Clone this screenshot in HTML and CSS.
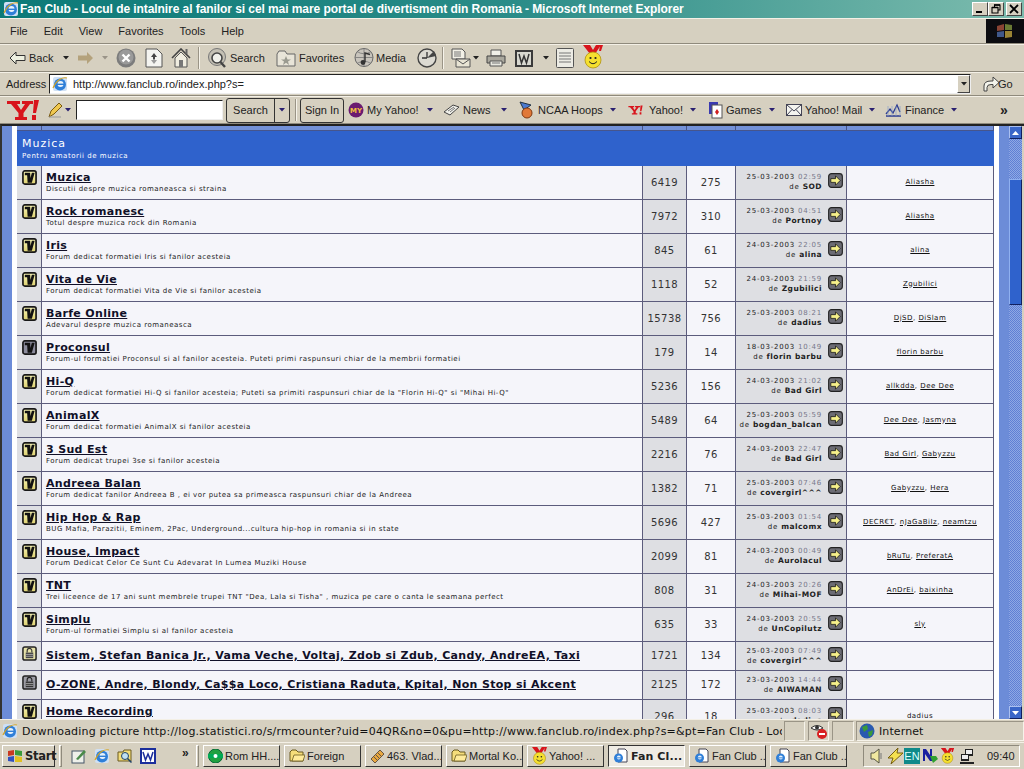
FILE: index.html
```html
<!DOCTYPE html>
<html lang="ro">
<head>
<meta charset="utf-8">
<title>Fan Club</title>
<link rel="stylesheet" href="styles.css">
</head>
<body>
<svg class="defs" width="0" height="0" aria-hidden="true">
  <defs>
    <linearGradient id="yg" x1="0" y1="0" x2="0" y2="1"><stop offset="0" stop-color="#fbf8b8"/><stop offset="1" stop-color="#dcd070"/></linearGradient>
    <symbol id="ie" viewBox="0 0 16 16">
      <rect x="1" y="1" width="14" height="14" rx="2" fill="#cfe0f4"/>
      <circle cx="8" cy="8.5" r="6" fill="#2f7fd8"/>
      <circle cx="8.5" cy="8" r="3" fill="#e8f2fb"/>
      <rect x="5" y="7.6" width="7" height="1.4" fill="#2f7fd8"/>
      <path d="M1 12C5 3 11 1 15 2" fill="none" stroke="#d9a520" stroke-width="1.2"/>
    </symbol>
    <symbol id="caret" viewBox="0 0 6 4"><path d="M0 0H6L3 3.5Z" fill="#222"/></symbol>
    <symbol id="ycaret" viewBox="0 0 6 4"><path d="M0 0H6L3 3.5Z" fill="#2a2070"/></symbol>
    <symbol id="ybang" viewBox="0 0 32 22">
      <path d="M0 2H13V5H10L14 11 18 5H15V2H26V5H23L16.500 14V18H20V21H8V18H11.500V14L4 5H0Z" fill="#d8141c"/>
      <path d="M27 1H32L29 14H26ZM25 16H29V21H25Z" fill="#d8141c"/>
    </symbol>
    <symbol id="forum" viewBox="0 0 16 16">
      <rect x="1" y="1" width="14" height="14" rx="2" fill="url(#yg)" stroke="#181818" stroke-width="1.8"/>
      <path d="M3 3H8.700L9 8.500 10.500 3H13.500L10.500 13.500H6L5.500 5.500H3Z" fill="#111"/>
    </symbol>
    <symbol id="forum-dim" viewBox="0 0 16 16">
      <rect x="1" y="1" width="14" height="14" rx="2" fill="#8c8c9c" stroke="#181818" stroke-width="1.8"/>
      <path d="M3 3H8.700L9 8.500 10.500 3H13.500L10.500 13.500H6L5.500 5.500H3Z" fill="#111"/>
    </symbol>
    <symbol id="lock" viewBox="0 0 16 16">
      <rect x="1" y="1" width="14" height="14" rx="2" fill="#e6e2a8" stroke="#222" stroke-width="1.6"/>
      <path d="M5.500 7V5A2.500 2.500 0 0 1 10.500 5V7" fill="none" stroke="#333" stroke-width="1.2"/>
      <rect x="4" y="7" width="8" height="6" fill="#444"/>
      <path d="M4 9H12M4 11H12" stroke="#bbb" stroke-width=".8"/>
    </symbol>
    <symbol id="lock-dim" viewBox="0 0 16 16">
      <rect x="1" y="1" width="14" height="14" rx="2" fill="#9c9ca4" stroke="#222" stroke-width="1.6"/>
      <path d="M5.500 7V5A2.500 2.500 0 0 1 10.500 5V7" fill="none" stroke="#222" stroke-width="1.2"/>
      <rect x="4" y="7" width="8" height="6" fill="#333"/>
      <path d="M4 9H12M4 11H12" stroke="#bbb" stroke-width=".8"/>
    </symbol>
    <symbol id="go" viewBox="0 0 16 16">
      <rect x=".7" y=".7" width="14.600" height="14.600" rx="3" fill="#6c6c74" stroke="#222" stroke-width="1.200"/>
      <path d="M3 6H8V3L13 8 8 13V10H3Z" fill="#f6f08a" stroke="#111" stroke-width=".8"/>
    </symbol>
    <symbol id="folder" viewBox="0 0 16 14">
      <path d="M1 3L3 1H7L9 3H14V12H1Z" fill="#f5dd7a" stroke="#6a5a20"/>
      <path d="M3 12L5 6H16L14 12Z" fill="#ffeb9a" stroke="#6a5a20" stroke-width=".8"/>
    </symbol>
    <symbol id="doc" viewBox="0 0 16 16">
      <path d="M5 1H12L14 3V14H5Z" fill="#fff" stroke="#445"/>
      <circle cx="5.500" cy="10" r="4.500" fill="#2f7fd8"/>
      <circle cx="5.800" cy="9.600" r="2" fill="#e8f2fb"/>
      <rect x="3.500" y="9.400" width="4.500" height=".9" fill="#2f7fd8"/>
    </symbol>
    <symbol id="smile" viewBox="0 0 20 24">
      <path d="M0 0H7L10 5 13 0H18L12 9H7Z" fill="#d8141c"/>
      <path d="M17 0H20L18 6H16Z" fill="#d8141c"/>
      <circle cx="10" cy="15" r="8" fill="#f5e030" stroke="#b09010" stroke-width=".8"/>
      <circle cx="7.500" cy="13" r="1.100" fill="#222"/>
      <circle cx="12.500" cy="13" r="1.100" fill="#222"/>
      <path d="M6 16.500Q10 21 14 16.500" fill="none" stroke="#222" stroke-width="1"/>
    </symbol>
  </defs>
</svg>

<header class="titlebar">
  <svg class="ic16" viewBox="0 0 16 16"><use href="#ie"/></svg>
  <span class="titletext">Fan Club - Locul de intalnire al fanilor si cel mai mare portal de divertisment din Romania - Microsoft Internet Explorer</span>
  <span class="winbtns">
    <span class="winbtn"><svg width="10" height="10" viewBox="0 0 10 10"><rect x="1" y="7" width="6" height="2" fill="#000"/></svg></span>
    <span class="winbtn"><svg width="10" height="10" viewBox="0 0 10 10"><path d="M3.500 3V1H9V6H7M1 3.500H7V9H1Z" fill="none" stroke="#000" stroke-width="1.100"/><path d="M3 1H9M1 3.500H7" stroke="#000" stroke-width="1.600"/></svg></span>
    <span class="winbtn winclose"><svg width="10" height="10" viewBox="0 0 10 10"><path d="M1 1L9 9M9 1L1 9" stroke="#000" stroke-width="1.800"/></svg></span>
  </span>
</header>

<nav class="menubar">
  <span>File</span><span>Edit</span><span>View</span><span>Favorites</span><span>Tools</span><span>Help</span>
  <span class="flag"><svg width="18" height="16" viewBox="0 0 18 16"><path d="M1 3L8 1V7L1 8Z" fill="#8a4434"/><path d="M9 1L16 2V7L9 7Z" fill="#6a7a34"/><path d="M1 9L8 8V14L1 14Z" fill="#40588a"/><path d="M9 8H16V14L9 15Z" fill="#9a8434"/></svg></span>
</nav>

<div class="toolbar">
  <svg class="t-back" width="17" height="14" viewBox="0 0 17 14"><path d="M7 1L1 7 7 13V9.500H16V4.500H7Z" fill="#eef0e0" stroke="#333"/></svg>
  <span class="t-label l-back">Back</span>
  <svg class="cr c-back" width="6" height="4"><use href="#caret"/></svg>
  <svg class="t-fwd" width="17" height="14" viewBox="0 0 17 14"><path d="M10 1L16 7 10 13V9.500H1V4.500H10Z" fill="#b4a27c"/></svg>
  <svg class="cr c-fwd" width="6" height="4" viewBox="0 0 6 4"><path d="M0 0H6L3 3.500Z" fill="#9a9488"/></svg>
  <svg class="t-stop" width="20" height="20" viewBox="0 0 20 20"><circle cx="10" cy="10" r="9.500" fill="#7c7c7c"/><circle cx="10" cy="9" r="7.500" fill="#9a9a9a"/><path d="M6.500 6.500L13.500 13.500M13.500 6.500L6.500 13.500" stroke="#fff" stroke-width="2.400"/></svg>
  <svg class="t-ref" width="18" height="20" viewBox="0 0 18 20"><path d="M1 1H12L17 6V19H1Z" fill="#f4f4f0" stroke="#555"/><path d="M9 5L6 9H8V11H10V9H12Z" fill="#444"/><path d="M9 16L12 12H10V11H8V12H6Z" fill="#9a9a9a"/></svg>
  <svg class="t-home" width="20" height="20" viewBox="0 0 20 20"><path d="M1 10L10 1 19 10" fill="none" stroke="#444" stroke-width="1.600"/><path d="M4 10L10 4 16 10V19H4Z" fill="#f0ede0" stroke="#555"/><rect x="8" y="12" width="4" height="7" fill="#777"/><rect x="14.500" y="1" width="2" height="5" fill="#666"/></svg>
  <span class="sep s1"></span>
  <svg class="t-search" width="20" height="21" viewBox="0 0 20 21"><circle cx="10" cy="9" r="8.500" fill="#c4c0b4" stroke="#777"/><circle cx="10" cy="10" r="5" fill="#f0f0ea" stroke="#444" stroke-width="1.600"/><path d="M13.500 14L18 19" stroke="#444" stroke-width="2.400"/></svg>
  <span class="t-label l-search">Search</span>
  <svg class="t-fav" width="20" height="17" viewBox="0 0 20 17"><path d="M1 4L3 1H9L11 4H19V16H1Z" fill="#e8e4d8" stroke="#666"/><path d="M10 6L11.500 9.500H15L12 11.500 13 15 10 12.800 7 15 8 11.500 5 9.500H8.500Z" fill="#9a9a90"/></svg>
  <span class="t-label l-fav">Favorites</span>
  <svg class="t-media" width="20" height="20" viewBox="0 0 20 20"><circle cx="10" cy="9.500" r="9" fill="#c8c4bc" stroke="#666"/><path d="M1 9.500H19M10 .5V18.500M3 3.500Q10 8 17 3.500M3 15.500Q10 11 17 15.500" fill="none" stroke="#777" stroke-width=".8"/><path d="M11 14V5L16 6.500" fill="none" stroke="#333" stroke-width="1.400"/><circle cx="9" cy="14.500" r="2.400" fill="#333"/></svg>
  <span class="t-label l-media">Media</span>
  <svg class="t-hist" width="20" height="20" viewBox="0 0 20 20"><circle cx="10" cy="10" r="9" fill="#dcdad2" stroke="#444" stroke-width="1.400"/><path d="M10 10L17 3 19 8Z" fill="#444"/><path d="M10 10V4M10 10H5" stroke="#333" stroke-width="1.300"/></svg>
  <span class="sep s2"></span>
  <svg class="t-mail" width="20" height="20" viewBox="0 0 20 20"><path d="M1 1H11L14 4V11H1Z" fill="#f2f0e6" stroke="#555"/><path d="M3 4H10M3 6H10M3 8H10" stroke="#777"/><path d="M5 11H19V19H5Z" fill="#e8e4d4" stroke="#555"/><path d="M5 11L12 16 19 11" fill="none" stroke="#555"/></svg>
  <svg class="cr c-mail" width="6" height="4"><use href="#caret"/></svg>
  <svg class="t-print" width="20" height="18" viewBox="0 0 20 18"><path d="M5 1H15V7H5Z" fill="#f0f0e8" stroke="#555"/><path d="M1 7H19V14H1Z" fill="#aaa89e" stroke="#444"/><path d="M4 12H16V17H4Z" fill="#e8e8e0" stroke="#555"/><path d="M6 14H14" stroke="#777"/></svg>
  <svg class="t-word" width="18" height="17" viewBox="0 0 18 17"><rect width="18" height="17" fill="#3a3a3a"/><rect x="2" y="2" width="14" height="13" fill="#d8d8d0"/><path d="M4 4L6.500 13 9 6 11.500 13 14 4" fill="none" stroke="#333" stroke-width="1.500"/></svg>
  <svg class="cr c-word" width="6" height="4"><use href="#caret"/></svg>
  <svg class="t-disc" width="18" height="20" viewBox="0 0 18 20"><rect x=".5" y=".5" width="17" height="19" rx="1" fill="#ecebe4" stroke="#555"/><path d="M3 5H15M3 8H15M3 11H15M3 14H15" stroke="#777"/></svg>
  <svg class="t-yim" width="20" height="24" viewBox="0 0 20 24"><use href="#smile"/></svg>
</div>

<div class="addressbar">
  <span class="addr-label">Address</span>
  <div class="addr-field">
    <svg class="ic16" viewBox="0 0 16 16"><use href="#ie"/></svg>
    <span class="addr-url">http://www.fanclub.ro/index.php?s=</span>
    <span class="addr-drop"><svg width="6" height="4"><use href="#caret"/></svg></span>
  </div>
  <svg class="go-ic" width="17" height="16" viewBox="0 0 17 16"><path d="M1 15V10Q1 5 8 5H10V1L16 6.500 10 12V8.500H8Q4 8.500 4 11.500V15Z" fill="#f4f4ec" stroke="#444"/></svg>
  <span class="go-label">Go</span>
</div>

<div class="ybar">
  <svg class="y-logo" width="32" height="22"><use href="#ybang"/></svg>
  <svg class="y-pen" width="17" height="18" viewBox="0 0 17 18"><path d="M2 16L4 10 12 2 15 5 7 13Z" fill="#f0c850" stroke="#7a5a10"/><path d="M2 16H14" stroke="#999"/></svg>
  <svg class="cr y-pc" width="6" height="4"><use href="#ycaret"/></svg>
  <span class="y-input"></span>
  <span class="y-search"><span class="y-s-l">Search</span><span class="y-s-r"><svg width="6" height="4"><use href="#ycaret"/></svg></span></span>
  <span class="sep y-sep"></span>
  <span class="y-sign">Sign In</span>
  <span class="y-item w-my"><svg width="16" height="16" viewBox="0 0 16 16"><circle cx="8" cy="8" r="7.500" fill="#6a1a70"/><text x="8" y="11" class="my-t">MY</text></svg><span>My Yahoo!</span><svg class="cr" width="6" height="4"><use href="#ycaret"/></svg></span>
  <span class="y-item w-news"><svg width="17" height="12" viewBox="0 0 17 12"><path d="M1 8L10 1 16 3 7 11Z" fill="#f0f0ea" stroke="#444"/><path d="M5 7L11 3M7 8L12 4" stroke="#777"/></svg><span>News</span><svg class="cr" width="6" height="4"><use href="#ycaret"/></svg></span>
  <span class="y-item w-ncaa"><svg width="17" height="18" viewBox="0 0 17 18"><path d="M2 1L13 4 6 9Z" fill="#4a7ad0" stroke="#234"/><circle cx="9" cy="12" r="5" fill="#e07838" stroke="#803810"/></svg><span>NCAA Hoops</span><svg class="cr" width="6" height="4"><use href="#ycaret"/></svg></span>
  <span class="y-item w-yah"><svg width="17" height="10" viewBox="0 0 32 22"><use href="#ybang"/></svg><span>Yahoo!</span><svg class="cr" width="6" height="4"><use href="#ycaret"/></svg></span>
  <span class="y-item w-games"><svg width="15" height="17" viewBox="0 0 15 17"><rect x="1" y="0" width="9" height="12" fill="#3a3ab0"/><rect x="4" y="3" width="10" height="13" fill="#fff" stroke="#555"/><path d="M9 7L11 10 9 13 7 10Z" fill="#d02020"/></svg><span>Games</span><svg class="cr" width="6" height="4"><use href="#ycaret"/></svg></span>
  <span class="y-item w-mail"><svg width="16" height="12" viewBox="0 0 16 12"><rect x=".5" y=".5" width="15" height="11" fill="#f4f4ef" stroke="#445"/><path d="M1 1L8 7 15 1M1 11L6 5.500M15 11L10 5.500" fill="none" stroke="#445"/></svg><span>Yahoo! Mail</span><svg class="cr" width="6" height="4"><use href="#ycaret"/></svg></span>
  <span class="y-item w-fin"><svg width="17" height="14" viewBox="0 0 17 14"><path d="M1 13H16" stroke="#2a3a90" stroke-width="1.500"/><path d="M1 11L5 6 8 10 12 2 15 9" fill="none" stroke="#2a3a90" stroke-width="1.300"/><path d="M3 3V13M7 3V13M11 3V13M15 3V13" stroke="#8aa0c8" stroke-width=".7"/></svg><span>Finance</span><svg class="cr" width="6" height="4"><use href="#ycaret"/></svg></span>
  <span class="y-more">&raquo;</span>
</div>

<main class="viewport">
  <div class="page">
    <div class="sheet">
      <table class="forums">
        <colgroup><col class="c1"><col class="c2"><col class="c3"><col class="c4"><col class="c5"><col class="c6"></colgroup>
        <tbody>
          <tr class="strip"><td></td><td></td><td></td><td></td><td></td><td></td></tr>
          <tr class="cat"><td colspan="6"><div class="cat-t">Muzica</div><div class="cat-d">Pentru amatorii de muzica</div></td></tr>
          <tr><td class="i"><svg class="fi"><use href="#forum"/></svg></td><td class="n"><a class="ft">Muzica</a><div class="fd">Discutii despre muzica romaneasca si straina</div></td><td class="s">6419</td><td class="r">275</td><td class="l"><div class="lp"><div class="lt"><div>25-03-2003 <span class="h">02:59</span></div><div>de <b>SOD</b></div></div><svg class="ga"><use href="#go"/></svg></div></td><td class="m"><a>Aliasha</a></td></tr>
          <tr><td class="i"><svg class="fi"><use href="#forum"/></svg></td><td class="n"><a class="ft">Rock romanesc</a><div class="fd">Totul despre muzica rock din Romania</div></td><td class="s">7972</td><td class="r">310</td><td class="l"><div class="lp"><div class="lt"><div>25-03-2003 <span class="h">04:51</span></div><div>de <b>Portnoy</b></div></div><svg class="ga"><use href="#go"/></svg></div></td><td class="m"><a>Aliasha</a></td></tr>
          <tr><td class="i"><svg class="fi"><use href="#forum"/></svg></td><td class="n"><a class="ft">Iris</a><div class="fd">Forum dedicat formatiei Iris si fanilor acesteia</div></td><td class="s">845</td><td class="r">61</td><td class="l"><div class="lp"><div class="lt"><div>24-03-2003 <span class="h">22:05</span></div><div>de <b>alina</b></div></div><svg class="ga"><use href="#go"/></svg></div></td><td class="m"><a>alina</a></td></tr>
          <tr><td class="i"><svg class="fi"><use href="#forum"/></svg></td><td class="n"><a class="ft">Vita de Vie</a><div class="fd">Forum dedicat formatiei Vita de Vie si fanilor acesteia</div></td><td class="s">1118</td><td class="r">52</td><td class="l"><div class="lp"><div class="lt"><div>24-03-2003 <span class="h">21:59</span></div><div>de <b>Zgubilici</b></div></div><svg class="ga"><use href="#go"/></svg></div></td><td class="m"><a>Zgubilici</a></td></tr>
          <tr><td class="i"><svg class="fi"><use href="#forum"/></svg></td><td class="n"><a class="ft">Barfe Online</a><div class="fd">Adevarul despre muzica romaneasca</div></td><td class="s">15738</td><td class="r">756</td><td class="l"><div class="lp"><div class="lt"><div>25-03-2003 <span class="h">08:21</span></div><div>de <b>dadius</b></div></div><svg class="ga"><use href="#go"/></svg></div></td><td class="m"><a>DjSD</a>, <a>DiSlam</a></td></tr>
          <tr><td class="i"><svg class="fi"><use href="#forum-dim"/></svg></td><td class="n"><a class="ft">Proconsul</a><div class="fd">Forum-ul formatiei Proconsul si al fanilor acesteia. Puteti primi raspunsuri chiar de la membrii formatiei</div></td><td class="s">179</td><td class="r">14</td><td class="l"><div class="lp"><div class="lt"><div>18-03-2003 <span class="h">10:49</span></div><div>de <b>florin barbu</b></div></div><svg class="ga"><use href="#go"/></svg></div></td><td class="m"><a>florin barbu</a></td></tr>
          <tr><td class="i"><svg class="fi"><use href="#forum"/></svg></td><td class="n"><a class="ft">Hi-Q</a><div class="fd">Forum dedicat formatiei Hi-Q si fanilor acesteia; Puteti sa primiti raspunsuri chiar de la "Florin Hi-Q" si "Mihai Hi-Q"</div></td><td class="s">5236</td><td class="r">156</td><td class="l"><div class="lp"><div class="lt"><div>24-03-2003 <span class="h">21:02</span></div><div>de <b>Bad Girl</b></div></div><svg class="ga"><use href="#go"/></svg></div></td><td class="m"><a>allkdda</a>, <a>Dee Dee</a></td></tr>
          <tr><td class="i"><svg class="fi"><use href="#forum"/></svg></td><td class="n"><a class="ft">AnimalX</a><div class="fd">Forum dedicat formatiei AnimalX si fanilor acesteia</div></td><td class="s">5489</td><td class="r">64</td><td class="l"><div class="lp"><div class="lt"><div>25-03-2003 <span class="h">05:59</span></div><div>de <b>bogdan_balcan</b></div></div><svg class="ga"><use href="#go"/></svg></div></td><td class="m"><a>Dee Dee</a>, <a>Jasmyna</a></td></tr>
          <tr><td class="i"><svg class="fi"><use href="#forum"/></svg></td><td class="n"><a class="ft">3 Sud Est</a><div class="fd">Forum dedicat trupei 3se si fanilor acesteia</div></td><td class="s">2216</td><td class="r">76</td><td class="l"><div class="lp"><div class="lt"><div>24-03-2003 <span class="h">22:47</span></div><div>de <b>Bad Girl</b></div></div><svg class="ga"><use href="#go"/></svg></div></td><td class="m"><a>Bad Girl</a>, <a>Gabyzzu</a></td></tr>
          <tr><td class="i"><svg class="fi"><use href="#forum"/></svg></td><td class="n"><a class="ft">Andreea Balan</a><div class="fd">Forum dedicat fanilor Andreea B , ei vor putea sa primeasca raspunsuri chiar de la Andreea</div></td><td class="s">1382</td><td class="r">71</td><td class="l"><div class="lp"><div class="lt"><div>25-03-2003 <span class="h">07:46</span></div><div>de <b>covergirl^^^</b></div></div><svg class="ga"><use href="#go"/></svg></div></td><td class="m"><a>Gabyzzu</a>, <a>Hera</a></td></tr>
          <tr><td class="i"><svg class="fi"><use href="#forum"/></svg></td><td class="n"><a class="ft">Hip Hop &amp; Rap</a><div class="fd">BUG Mafia, Parazitii, Eminem, 2Pac, Underground...cultura hip-hop in romania si in state</div></td><td class="s">5696</td><td class="r">427</td><td class="l"><div class="lp"><div class="lt"><div>25-03-2003 <span class="h">01:54</span></div><div>de <b>malcomx</b></div></div><svg class="ga"><use href="#go"/></svg></div></td><td class="m"><a>DECR€T</a>, <a>nJaGaBiIz</a>, <a>neamtzu</a></td></tr>
          <tr><td class="i"><svg class="fi"><use href="#forum"/></svg></td><td class="n"><a class="ft">House, Impact</a><div class="fd">Forum Dedicat Celor Ce Sunt Cu Adevarat In Lumea Muziki House</div></td><td class="s">2099</td><td class="r">81</td><td class="l"><div class="lp"><div class="lt"><div>24-03-2003 <span class="h">00:49</span></div><div>de <b>Aurolacul</b></div></div><svg class="ga"><use href="#go"/></svg></div></td><td class="m"><a>bRuTu</a>, <a>PreferatA</a></td></tr>
          <tr><td class="i"><svg class="fi"><use href="#forum"/></svg></td><td class="n"><a class="ft">TNT</a><div class="fd">Trei liceence de 17 ani sunt membrele trupei TNT "Dea, Lala si Tisha" , muzica pe care o canta le seamana perfect</div></td><td class="s">808</td><td class="r">31</td><td class="l"><div class="lp"><div class="lt"><div>24-03-2003 <span class="h">20:26</span></div><div>de <b>Mihai-MOF</b></div></div><svg class="ga"><use href="#go"/></svg></div></td><td class="m"><a>AnDrEi</a>, <a>baixinha</a></td></tr>
          <tr><td class="i"><svg class="fi"><use href="#forum"/></svg></td><td class="n"><a class="ft">Simplu</a><div class="fd">Forum-ul formatiei Simplu si al fanilor acesteia</div></td><td class="s">635</td><td class="r">33</td><td class="l"><div class="lp"><div class="lt"><div>24-03-2003 <span class="h">20:55</span></div><div>de <b>UnCopilutz</b></div></div><svg class="ga"><use href="#go"/></svg></div></td><td class="m"><a>sly</a></td></tr>
          <tr class="short"><td class="i"><svg class="fi"><use href="#lock"/></svg></td><td class="n"><a class="ft">Sistem, Stefan Banica Jr., Vama Veche, Voltaj, Zdob si Zdub, Candy, AndreEA, Taxi</a></td><td class="s">1721</td><td class="r">134</td><td class="l"><div class="lp"><div class="lt"><div>25-03-2003 <span class="h">07:49</span></div><div>de <b>covergirl^^^</b></div></div><svg class="ga"><use href="#go"/></svg></div></td><td class="m"></td></tr>
          <tr class="short"><td class="i"><svg class="fi"><use href="#lock-dim"/></svg></td><td class="n"><a class="ft">O-ZONE, Andre, Blondy, Ca$$a Loco, Cristiana Raduta, Kpital, Non Stop si Akcent</a></td><td class="s">2125</td><td class="r">172</td><td class="l"><div class="lp"><div class="lt"><div>23-03-2003 <span class="h">14:44</span></div><div>de <b>AIWAMAN</b></div></div><svg class="ga"><use href="#go"/></svg></div></td><td class="m"></td></tr>
          <tr><td class="i"><svg class="fi"><use href="#forum"/></svg></td><td class="n"><a class="ft">Home Recording</a><div class="fd">Totul despre productia muzicala</div></td><td class="s">296</td><td class="r">18</td><td class="l"><div class="lp"><div class="lt"><div>25-03-2003 <span class="h">08:03</span></div><div>de <b>dadius</b></div></div><svg class="ga"><use href="#go"/></svg></div></td><td class="m"><a>dadius</a></td></tr>
        </tbody>
      </table>
    </div>
  </div>
  <div class="scrollbar">
    <span class="sb-btn"><svg width="7" height="4" viewBox="0 0 7 4"><path d="M0 4H7L3.500 0Z" fill="#fff"/></svg></span>
    <span class="sb-space s-a"></span>
    <span class="sb-thumb"></span>
    <span class="sb-space s-b"></span>
    <span class="sb-btn"><svg width="7" height="4" viewBox="0 0 7 4"><path d="M0 0H7L3.500 4Z" fill="#fff"/></svg></span>
  </div>
</main>

<div class="statusbar">
  <svg class="ic16 st-ie" viewBox="0 0 16 16"><use href="#ie"/></svg>
  <span class="st-text">Downloading picture http://log.statistici.ro/s/rmcounter?uid=04QR&amp;no=0&amp;pu=http://www.fanclub.ro/index.php?s=&amp;pt=Fan Club - Locul de intalnire</span>
  <span class="pane p1"></span>
  <span class="pane p2"><svg width="18" height="17" viewBox="0 0 18 17"><path d="M1 5Q7 0 13 5 7 9 1 5Z" fill="#fff" stroke="#333"/><circle cx="7" cy="4.500" r="2" fill="#333"/><circle cx="12" cy="11" r="5" fill="#d82020"/><rect x="9" y="10" width="6" height="2" fill="#fff"/></svg></span>
  <span class="pane p3"></span>
  <span class="pane p4"><svg width="16" height="16" viewBox="0 0 16 16"><circle cx="8" cy="8" r="7.500" fill="#2a5ab0"/><path d="M3 4L8 2 9 6 5 9ZM9 9L14 7 13 12 10 14Z" fill="#3a9a3a"/></svg><span class="p-net">Internet</span></span>
</div>

<footer class="taskbar">
  <span class="start"><svg width="16" height="14" viewBox="0 0 16 14"><path d="M1 2L7 1V6L1 7Z" fill="#c83820"/><path d="M8 1L15 2V7L8 6Z" fill="#3a9a3a"/><path d="M1 8L7 7V13L1 12Z" fill="#3050c0"/><path d="M8 7L15 8V13L8 13Z" fill="#e0c020"/></svg><b>Start</b></span>
  <span class="handle h1"></span>
  <svg class="ql q1" width="16" height="16" viewBox="0 0 16 16"><rect x="1" y="3" width="12" height="12" fill="#eef0ea" stroke="#456"/><path d="M5 11L13 2 15 4 7 12Z" fill="#4a8a4a"/></svg>
  <svg class="ql q2" width="16" height="16"><use href="#ie"/></svg>
  <svg class="ql q3" width="16" height="16" viewBox="0 0 16 16"><path d="M1 4H6L7 2H14V13H1Z" fill="#f3dc78" stroke="#6a5a20"/><circle cx="8" cy="8" r="3.500" fill="#bfe0f4" stroke="#246"/><path d="M10.500 10.500L14.500 14.500" stroke="#246" stroke-width="1.600"/></svg>
  <svg class="ql q4" width="16" height="16" viewBox="0 0 16 16"><rect width="16" height="16" fill="#1c2f9c"/><rect x="2" y="2" width="12" height="12" fill="#fff"/><path d="M3 4L5.500 12 8 6 10.500 12 13 4" fill="none" stroke="#1c2f9c" stroke-width="1.500"/></svg>
  <span class="ql-more">&raquo;</span>
  <span class="handle h2"></span>
  <span class="tasks">
    <span class="task"><svg width="15" height="14" viewBox="0 0 15 14"><circle cx="7.500" cy="7" r="7" fill="#20a040" stroke="#063"/><rect x="0" y="5" width="15" height="4" fill="#0a5"/><circle cx="7.500" cy="7" r="2" fill="#fff"/></svg><span>Rom HH....</span></span>
    <span class="task"><svg width="16" height="14"><use href="#folder"/></svg><span>Foreign</span></span>
    <span class="task"><svg width="15" height="15" viewBox="0 0 15 15"><path d="M1 10L10 1 14 5 5 14Z" fill="#e8a840" stroke="#654"/><path d="M4 8L8 12M6 6L10 10M8 4L12 8" stroke="#654"/></svg><span>463. Vlad...</span></span>
    <span class="task"><svg width="16" height="14"><use href="#folder"/></svg><span>Mortal Ko...</span></span>
    <span class="task"><svg width="15" height="18" viewBox="0 0 20 24"><use href="#smile"/></svg><span>Yahoo! ...</span></span>
    <span class="task active"><svg width="16" height="16"><use href="#doc"/></svg><span>Fan Cl...</span></span>
    <span class="task"><svg width="16" height="16"><use href="#doc"/></svg><span>Fan Club ...</span></span>
    <span class="task"><svg width="16" height="16"><use href="#doc"/></svg><span>Fan Club ...</span></span>
  </span>
  <span class="tray">
    <svg width="14" height="16" viewBox="0 0 14 16"><path d="M1 5H4L9 1V15L4 11H1Z" fill="#f0e8a0" stroke="#554"/><path d="M11 5V11" stroke="#777"/></svg>
    <svg class="tr-bolt" width="17" height="16" viewBox="0 0 17 16"><path d="M11 0L1 10 6 10 4 16 16 5H10Z" fill="#f4e050" stroke="#776010"/></svg>
    <span class="en">EN</span>
    <svg class="tr-n" width="16" height="16" viewBox="0 0 16 16"><path d="M1 1H4L8 7V1H10V13H8L3 6V13H1Z" fill="#1a20a0"/><path d="M8 8L14 8 16 11 11 15Z" fill="#30a030"/></svg>
    <svg class="tr-y" width="15" height="16" viewBox="0 0 20 24"><use href="#smile"/></svg>
    <svg class="tr-net" width="15" height="15" viewBox="0 0 15 15"><rect x="5" y="0" width="8" height="7" fill="#222"/><rect x="6" y="1" width="6" height="4" fill="#eee"/><rect x="1" y="5" width="8" height="7" fill="#222"/><rect x="2" y="6" width="6" height="4" fill="#eee"/><rect x="0" y="13" width="14" height="2" fill="#222"/></svg>
    <span class="clock">09:40</span>
  </span>
</footer>
</body>
</html>
```

FILE: styles.css
```css
* { box-sizing: border-box; }
html, body { margin: 0; padding: 0; }
body {
  width: 1024px; height: 769px; overflow: hidden;
  display: flex; flex-direction: column;
  background: #d6d0c0; color: #111;
  font: 11px "Liberation Sans", Arial, sans-serif;
}
.defs { position: absolute; }
svg { display: block; flex: none; }
.my-t { font: bold 7px "DejaVu Sans", sans-serif; fill: #f0c040; text-anchor: middle; }
.ic16 { width: 16px; height: 16px; }

/* title bar */
.titlebar {
  height: 18px; flex: none; display: flex; align-items: center; padding: 0 2px 0 3px;
  background: linear-gradient(90deg, #0c7a78 0%, #2a8c88 50%, #7dbcae 100%);
}
.titletext { margin-left: 1px; color: #fff; font: bold 12px "Liberation Sans", sans-serif; letter-spacing: -.07px; white-space: nowrap; }
.winbtns { margin-left: auto; display: flex; }
.winbtn {
  width: 16px; height: 14px; display: flex; align-items: center; justify-content: center;
  background: #d6d0c0; border: 1px solid; border-color: #fff #444 #444 #fff;
}
.winclose { margin-left: 2px; }

/* menu */
.menubar {
  height: 26px; flex: none; display: flex; align-items: center; gap: 16px; padding-left: 10px;
  border-top: 1px solid #f4f0e6; border-bottom: 1px solid #8f8a7c; color: #222;
}
.flag {
  margin-left: auto; width: 38px; height: 24px; background: #0c0c10;
  display: flex; align-items: center; justify-content: center;
}

/* IE toolbar */
.toolbar {
  height: 28px; flex: none; display: flex; align-items: center;
  border-top: 1px solid #f4f0e6; border-bottom: 1px solid #8f8a7c; color: #222;
}
.t-label { flex: none; }
.t-back { margin-left: 9px; }
.l-back { margin-left: 3px; width: 26px; }
.c-back { margin-left: 8px; }
.t-fwd { margin-left: 8px; }
.c-fwd { margin-left: 8px; }
.t-stop { margin-left: 8px; }
.t-ref { margin-left: 9px; }
.t-home { margin-left: 8px; }
.sep { width: 2px; height: 22px; border-left: 1px solid #9a9486; border-right: 1px solid #f6f3ea; flex: none; }
.s1 { margin-left: 7px; }
.t-search { margin-left: 7px; }
.l-search { margin-left: 3px; width: 35px; }
.t-fav { margin-left: 11px; }
.l-fav { margin-left: 3px; width: 44px; }
.t-media { margin-left: 11px; }
.l-media { margin-left: 2px; width: 31px; }
.t-hist { margin-left: 10px; }
.s2 { margin-left: 5px; }
.t-mail { margin-left: 7px; }
.c-mail { margin-left: 2px; }
.t-print { margin-left: 7px; }
.t-word { margin-left: 9px; }
.c-word { margin-left: 10px; }
.t-disc { margin-left: 7px; }
.t-yim { margin-left: 9px; margin-top: -3px; }

/* address */
.addressbar {
  height: 24px; flex: none; display: flex; align-items: center; padding-left: 6px;
  border-top: 1px solid #f4f0e6; border-bottom: 1px solid #8f8a7c; color: #222;
}
.addr-label { width: 43px; }
.addr-field {
  width: 922px; height: 20px; display: flex; align-items: center; padding-left: 2px;
  background: #fff; border: 1px solid; border-color: #222 #eee #eee #222;
}
.addr-url { margin-left: 5px; }
.addr-drop {
  margin-left: auto; width: 13px; height: 18px; background: #d6d0c0;
  border: 1px solid; border-color: #fff #444 #444 #fff;
  display: flex; align-items: center; justify-content: center;
}
.go-ic { margin-left: 12px; }
.go-label { margin-left: -2px; }

/* yahoo bar */
.ybar {
  height: 28px; flex: none; display: flex; align-items: center; color: #222;
  border-top: 1px solid #f4f0e6; border-bottom: 1px solid #8f8a7c;
}
.y-logo { margin-left: 7px; }
.y-pen { margin-left: 8px; }
.y-pc { margin-left: 1px; }
.y-input {
  margin-left: 5px; width: 147px; height: 20px; background: #fff;
  border: 1px solid; border-color: #222 #eee #eee #222;
}
.y-search {
  margin-left: 3px; width: 64px; height: 25px; display: flex;
  border: 1px solid #333; border-radius: 3px;
}
.y-s-l { width: 48px; display: flex; align-items: center; justify-content: center; border-right: 1px solid #333; }
.y-s-r { flex: 1; display: flex; align-items: center; justify-content: center; }
.y-sep { margin-left: 5px; }
.y-sign {
  margin-left: 3px; width: 44px; height: 25px; display: flex; align-items: center; justify-content: center;
  border: 1px solid #333; border-radius: 3px;
}
.y-item { display: flex; align-items: center; flex: none; gap: 3px; white-space: nowrap; }
.y-item .cr { margin-left: auto; }
.w-my { margin-left: 4px; width: 85px; }
.w-news { margin-left: 10px; width: 64px; }
.w-ncaa { margin-left: 11px; width: 98px; }
.w-yah { margin-left: 11px; width: 69px; }
.w-yah > span { margin-left: 2px; }
.w-games { margin-left: 12px; width: 67px; }
.w-mail { margin-left: 11px; width: 89px; }
.w-fin { margin-left: 10px; width: 72px; }
.y-more { margin-left: 43px; font: bold 14px "Liberation Sans", sans-serif; }

/* page viewport */
.viewport {
  flex: 1; min-height: 0; display: flex; overflow: hidden;
  border-top: 2px solid #222; border-left: 2px solid #333;
  background: #fff;
}
.page {
  flex: 1; min-width: 0; overflow: hidden; padding: 0 10px 0 1px;
  background: #6c8cd8;
}
.sheet { background: #fff; padding: 0 5px; margin-left: 9px; height: 100%; overflow: hidden; width: 987px; }

.forums { width: 977px; table-layout: fixed; border-collapse: separate; border-spacing: 0; color: #111; }
.c1 { width: 25px; } .c2 { width: 601px; } .c3 { width: 44px; } .c4 { width: 49px; } .c5 { width: 111px; } .c6 { width: 147px; }
.forums td { padding: 0; height: 34px; background: #f5f5fa; border-bottom: 1px solid #5c5c7c; border-right: 1px solid #5c5c7c; }
.forums .strip td { height: 5px; background: #7391d8; border-color: #46558c; }
.forums .cat td {
  height: 35px; background: #2f62cc; color: #fff; padding-left: 5px; border-color: #2f62cc; vertical-align: middle;
}
.cat-t { font: 11px/15px "DejaVu Sans", sans-serif; letter-spacing: 1px; }
.cat-d { font: 7px/10px "DejaVu Sans", sans-serif; letter-spacing: .55px; white-space: nowrap; }
.forums .short td { height: 29px; }
.forums td.i { background: #dedfe3; vertical-align: top; padding: 4px 0 0 5px; }
.fi { width: 15px; height: 15px; }
.forums td.n { padding-left: 4px; vertical-align: top; }
.forums .short td.n { vertical-align: middle; padding-bottom: 2px; }
.ft { display: inline-block; margin-top: 5px; font: bold 11px/13px "DejaVu Sans", sans-serif; letter-spacing: .33px; text-decoration: underline; color: #101028; white-space: nowrap; }
.forums .short .ft { margin-top: 0; }
.fd { font: 7px/10px "DejaVu Sans", sans-serif; letter-spacing: .5px; color: #222; white-space: nowrap; }
.forums td.s, .forums td.r { text-align: center; font: 10px "DejaVu Sans", sans-serif; letter-spacing: .4px; color: #333; }
.forums .short td.s, .forums .short td.r { padding-bottom: 2px; }
.forums td.s, .forums td.l { background: #dedfe3; }
.lp { display: flex; align-items: center; justify-content: flex-end; padding: 0 3px 1px 0; gap: 6px; }
.lt { text-align: right; font: 7px/10px "DejaVu Sans", sans-serif; letter-spacing: .78px; color: #222; white-space: nowrap; }
.lt b { font-weight: 700; font-size: 7.5px; letter-spacing: .45px; }
.h { color: #77778a; }
.ga { width: 15px; height: 15px; margin-bottom: 3px; }
.forums td.m { text-align: center; font: 7px "DejaVu Sans", sans-serif; letter-spacing: .5px; color: #111; padding-bottom: 2px; }
.m a { text-decoration: underline; }

/* scrollbar */
.scrollbar { width: 15px; flex: none; display: flex; flex-direction: column; border-right: 2px solid #d6d0c0; }
.sb-btn {
  height: 13px; flex: none; background: #3a66c8; border: 1px solid; border-color: #aac0f0 #102060 #102060 #aac0f0;
  display: flex; align-items: center; justify-content: center;
}
.sb-space { background: repeating-conic-gradient(#8fa8e4 0 25%, #5f80d4 0 50%) 0 0 / 2px 2px; }
.s-a { height: 40px; flex: none; }
.s-b { flex: 1; }
.sb-thumb { height: 126px; flex: none; background: #2f62cc; border: 1px solid; border-color: #8fb0f0 #102060 #102060 #8fb0f0; }

/* status */
.statusbar {
  height: 23px; flex: none; display: flex; align-items: center; padding-left: 2px;
  border-top: 1px solid #f4f0e6; color: #111;
}
.st-text { margin-left: 4px; width: 760px; overflow: hidden; white-space: nowrap; font: 11px "DejaVu Sans", sans-serif; letter-spacing: .2px; flex: none; }
.pane { height: 20px; flex: none; display: flex; align-items: center; border: 1px solid; border-color: #9a9486 #f6f3ea #f6f3ea #9a9486; }
.p1 { margin-left: 2px; width: 21px; }
.p2 { margin-left: 3px; width: 21px; padding-left: 1px; }
.p3 { margin-left: 3px; width: 22px; }
.p4 { margin-left: 2px; width: 168px; padding-left: 2px; }
.p-net { margin-left: 4px; font: 11px "DejaVu Sans", sans-serif; letter-spacing: .1px; }

/* taskbar */
.taskbar {
  height: 27px; flex: none; display: flex; align-items: center; padding-left: 2px;
  border-top: 1px solid #f4f0e6; background: #d6d0c0; color: #222;
}
.start {
  width: 53px; height: 22px; display: flex; align-items: center; padding-left: 4px; gap: 2px;
  border: 1px solid; border-color: #fff #333 #333 #fff;
}
.start b { font: bold 11.5px "DejaVu Sans", sans-serif; letter-spacing: -.3px; }
.handle { width: 3px; height: 22px; border: 1px solid; border-color: #fff #8f8a7c #8f8a7c #fff; flex: none; }
.h1 { margin-left: 4px; }
.q1 { margin-left: 9px; } .q2, .q3, .q4 { margin-left: 7px; }
.ql-more { margin-left: 26px; margin-top: -6px; font: bold 12px "Liberation Sans", sans-serif; width: 14px; }
.tasks { margin-left: 4px; display: flex; gap: 4px; }
.task {
  width: 77px; height: 22px; display: flex; align-items: center; gap: 2px; padding-left: 4px; white-space: nowrap; overflow: hidden;
  border: 1px solid; border-color: #fff #333 #333 #fff;
}
.task.active { border-color: #333 #fff #fff #333; background: #efece4; font: bold 11px "DejaVu Sans", sans-serif; letter-spacing: .1px; }
.tray {
  margin-left: 16px; width: 157px; height: 22px; display: flex; align-items: center; padding-left: 6px;
  border: 1px solid; border-color: #8f8a7c #fff #fff #8f8a7c;
}
.tr-bolt { margin-left: 3px; }
.en { width: 16px; height: 16px; background: #0e8a8a; color: #dff; line-height: 16px; text-align: center; flex: none; }
.tr-n, .tr-y { margin-left: 2px; }
.tr-net { margin-left: 5px; }
.clock { margin-left: 12px; }
```
